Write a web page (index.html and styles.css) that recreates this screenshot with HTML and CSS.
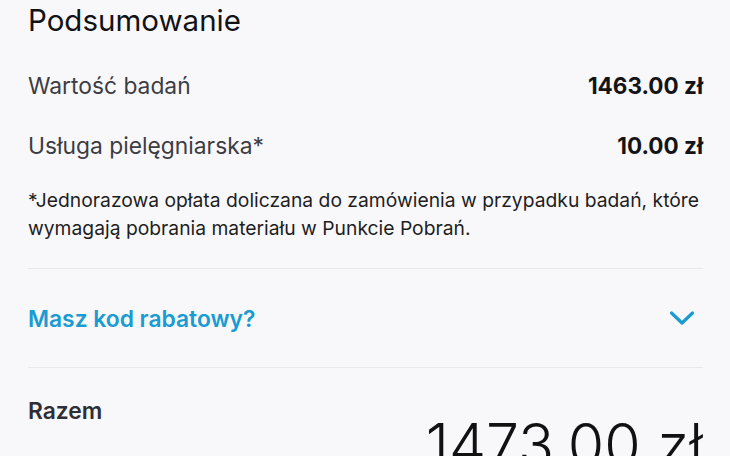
FILE: index.html
```html
<!DOCTYPE html>
<html lang="pl">
<head>
<meta charset="utf-8">
<link rel="stylesheet" href="styles.css">
</head>
<body>
<main class="summary">
  <h1 class="title">Podsumowanie</h1>
  <div class="row">
    <span class="label">Wartość badań</span>
    <span class="value">1463.00 zł</span>
  </div>
  <div class="row">
    <span class="label">Usługa pielęgniarska*</span>
    <span class="value">10.00 zł</span>
  </div>
  <p class="note">*Jednorazowa opłata doliczana do zamówienia w przypadku badań, które wymagają pobrania materiału w Punkcie Pobrań.</p>
  <div class="discount">
    <span class="discount-text">Masz kod rabatowy?</span>
    <svg class="chevron" width="26" height="16" viewBox="0 0 26 16"><path d="M2.5 3 L13 13 L23.5 3" fill="none" stroke="#1a9bd2" stroke-width="3.2" stroke-linecap="round" stroke-linejoin="round"/></svg>
  </div>
  <div class="total">
    <span class="total-label">Razem</span>
    <span class="total-value">1473.00 zł</span>
  </div>
</main>
</body>
</html>
```
FILE: styles.css
```css
html, body {
  margin: 0;
  padding: 0;
  background: #f8f8fb;
  overflow: hidden;
}
body {
  font-family: Inter, "Noto Sans", sans-serif;
  color: #141416;
}
.summary {
  padding: 0 27px 0 28px;
}
.title {
  margin: 0;
  font-size: 29.5px;
  font-weight: 400;
  line-height: 40px;
  color: #121214;
}
.row {
  display: flex;
  justify-content: space-between;
  align-items: center;
  height: 60px;
}
.row:first-of-type { margin-top: 15px; }
.label {
  font-size: 22.8px;
  color: #3c3c42;
}
.value {
  font-size: 22.5px;
  font-weight: 650;
  color: #141416;
}
.note {
  margin: 11px 0 0;
  font-size: 19.3px;
  line-height: 28px;
  color: #1e1e22;
  padding-bottom: 26px;
  border-bottom: 1px solid #e8e8ec;
}
.discount {
  display: flex;
  justify-content: space-between;
  align-items: center;
  height: 98px;
  border-bottom: 1px solid #e8e8ec;
  padding-right: 8px;
}
.discount-text {
  font-size: 22.8px;
  font-weight: 600;
  color: #1a9bd2;
}
.total {
  display: flex;
  justify-content: space-between;
  align-items: flex-start;
  padding-top: 29px;
}
.total-label {
  font-size: 22.8px;
  line-height: 28px;
  font-weight: 600;
  color: #2e2e34;
}
.total-value {
  margin-top: 18px;
  font-size: 59px;
  font-weight: 300;
  line-height: 1;
  color: #111;
}
```
